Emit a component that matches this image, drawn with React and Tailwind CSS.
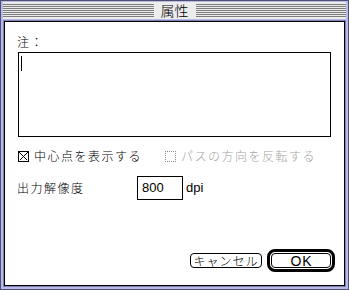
import React from "react";

const jp = "font-['Noto_Sans_CJK_JP','Noto_Sans_CJK_SC',sans-serif] font-light";
const lat = "font-['Liberation_Sans','Noto_Sans_CJK_JP',sans-serif]";

function Stripes() {
  return (
    <div className="flex-1 flex flex-col gap-px">
      {[0, 1, 2, 3, 4, 5, 6].map((i) => (
        <div key={i} className="h-px bg-[#7c7c7c]" />
      ))}
    </div>
  );
}

function CheckedBox() {
  return (
    <svg width="11" height="11" viewBox="0 0 11 11" shapeRendering="crispEdges" className="shrink-0">
      <rect x="0.5" y="0.5" width="10" height="10" fill="white" stroke="black" />
      <path d="M1.5 1.5 L9.5 9.5 M9.5 1.5 L1.5 9.5" stroke="black" strokeWidth="1" />
    </svg>
  );
}

export default function App() {
  return (
    <div className="w-[349px] h-[290px] border border-[#4e4e70] bg-[#babae8] pt-px px-[2px] pb-[2px] flex flex-col">
      {/* title bar */}
      <div className="h-[17px] bg-[#ececec] flex items-center">
        <Stripes />
        <div className={`px-[7px] text-[14px] leading-[17px] text-black ${jp}`}>属性</div>
        <Stripes />
      </div>
      <div className="h-px" />
      {/* body */}
      <div className="flex-1 border border-[#8080b4] flex">
        <div className="flex-1 border border-black bg-white flex flex-col pl-[12px] pr-[9px] pt-[12px] pb-[13px] text-black">
          <div className={`h-[16px] leading-[16px] text-[12px] tracking-[1.5px] ${jp}`}>注：</div>
          <div className="ml-px mt-[2px] w-[313px] h-[85px] border border-black relative">
            <div className="absolute left-[2px] top-[3px] w-px h-[15px] bg-black" />
          </div>
          <div className="ml-px mt-[11px] h-[16px] flex items-center">
            <CheckedBox />
            <span className={`ml-[5px] text-[12px] leading-[16px] tracking-[1.5px] ${jp}`}>中心点を表示する</span>
            <div className="ml-[23px] w-[11px] h-[11px] border border-dotted border-[#8c8c8c] shrink-0" />
            <span className={`ml-[5px] text-[12px] leading-[16px] tracking-[1.5px] text-[#a4a4a4] ${jp}`}>パスの方向を反転する</span>
          </div>
          <div className="mt-[12px] h-[24px] flex items-center">
            <span className={`w-[120px] shrink-0 text-[12px] leading-[16px] tracking-[1.5px] ${jp}`}>出力解像度</span>
            <div className={`w-[46px] h-[24px] border border-black flex items-center pl-[4px] text-[13px] ${lat}`}>800</div>
            <span className={`ml-[3px] text-[13px] ${lat}`}>dpi</span>
          </div>
          <div className="flex-1" />
          <div className="flex justify-end items-center gap-[5px]">
            <div className={`w-[72px] h-[15px] rounded-[4px] border border-black flex items-center justify-center text-[12px] leading-none tracking-[1px] ${jp}`}>
              キャンセル
            </div>
            <div className="w-[68px] h-[23px] rounded-[8px] border-[3px] border-black p-px">
              <div className={`w-full h-full rounded-[4px] border border-black flex items-center justify-center text-[14px] leading-none tracking-[1px] pl-px ${lat}`}>
                OK
              </div>
            </div>
          </div>
        </div>
      </div>
    </div>
  );
}
